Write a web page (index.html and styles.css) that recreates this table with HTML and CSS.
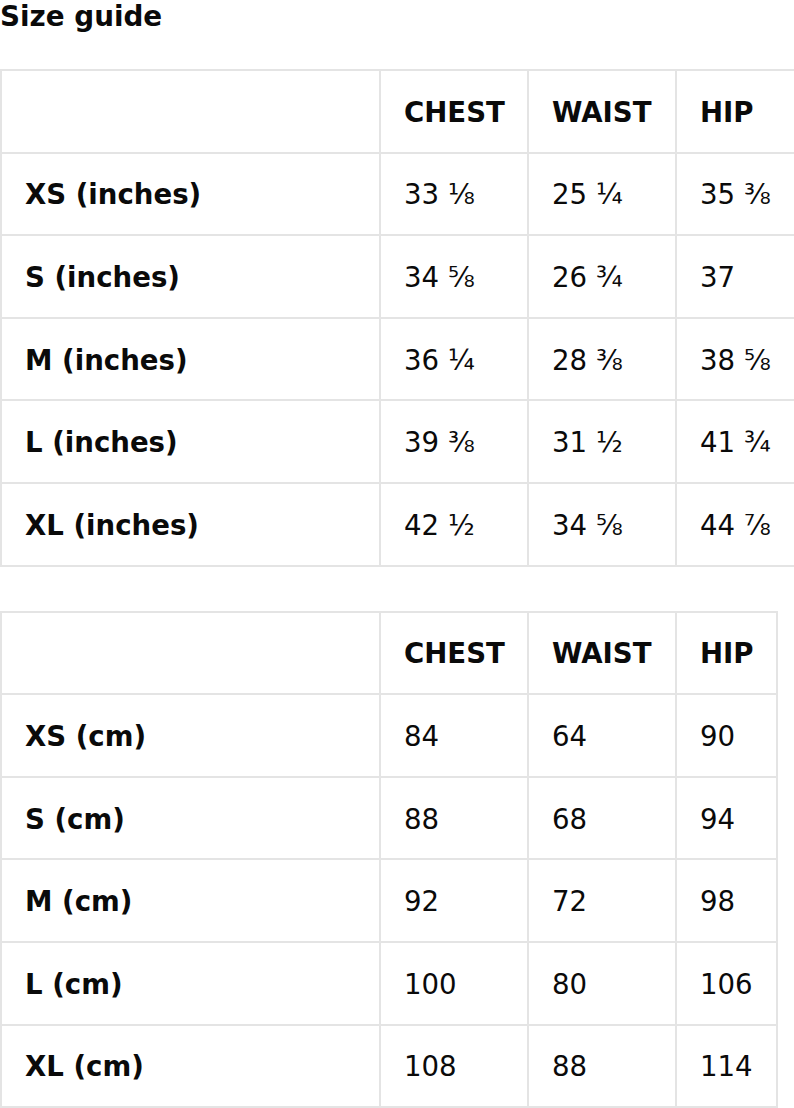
FILE: index.html
```html
<!DOCTYPE html>
<html lang="en">
<head>
<meta charset="utf-8">
<title>Size guide</title>
<link rel="stylesheet" href="styles.css">
</head>
<body>
<div class="page">
  <h1 class="title">Size guide</h1>
  <table class="sizes sizes-in">
    <colgroup><col class="c-label"><col class="c-val"><col class="c-val"><col class="c-last"></colgroup>
    <thead>
      <tr><th></th><th>CHEST</th><th>WAIST</th><th>HIP</th></tr>
    </thead>
    <tbody>
      <tr><th>XS (inches)</th><td>33 ⅛</td><td>25 ¼</td><td>35 ⅜</td></tr>
      <tr><th>S (inches)</th><td>34 ⅝</td><td>26 ¾</td><td>37</td></tr>
      <tr><th>M (inches)</th><td>36 ¼</td><td>28 ⅜</td><td>38 ⅝</td></tr>
      <tr><th>L (inches)</th><td>39 ⅜</td><td>31 ½</td><td>41 ¾</td></tr>
      <tr><th>XL (inches)</th><td>42 ½</td><td>34 ⅝</td><td>44 ⅞</td></tr>
    </tbody>
  </table>
  <table class="sizes sizes-cm">
    <colgroup><col class="c-label"><col class="c-val"><col class="c-val"><col class="c-last"></colgroup>
    <thead>
      <tr><th></th><th>CHEST</th><th>WAIST</th><th>HIP</th></tr>
    </thead>
    <tbody>
      <tr><th>XS (cm)</th><td>84</td><td>64</td><td>90</td></tr>
      <tr><th>S (cm)</th><td>88</td><td>68</td><td>94</td></tr>
      <tr><th>M (cm)</th><td>92</td><td>72</td><td>98</td></tr>
      <tr><th>L (cm)</th><td>100</td><td>80</td><td>106</td></tr>
      <tr><th>XL (cm)</th><td>108</td><td>88</td><td>114</td></tr>
    </tbody>
  </table>
</div>
</body>
</html>
```

FILE: styles.css
```css
html, body {
  margin: 0;
  padding: 0;
  background: #ffffff;
}

body {
  font-family: "DejaVu Sans", Verdana, sans-serif;
  color: #0a0a0a;
}

.page {
  width: 794px;
  height: 1108px;
  overflow: hidden;
}

.title {
  margin: 0;
  font-size: 27.8px;
  font-weight: bold;
  line-height: 33px;
  height: 33px;
}

.sizes {
  border-collapse: separate;
  border-spacing: 0;
  table-layout: fixed;
  border-top: 2px solid #e4e4e4;
  border-left: 2px solid #e4e4e4;
  font-size: 27.6px;
}

.sizes-in {
  margin-top: 36px;
  width: 812px;
}

.sizes-cm {
  margin-top: 44px;
  width: 778px;
}

.c-label { width: 379px; }
.c-val { width: 148px; }

.sizes th,
.sizes td {
  box-sizing: border-box;
  height: 82.6px;
  padding: 3px 0 0 23px;
  border-right: 2px solid #e4e4e4;
  border-bottom: 2px solid #e4e4e4;
  text-align: left;
  vertical-align: middle;
  white-space: nowrap;
  line-height: 32px;
}

.sizes th {
  font-weight: bold;
}

.sizes td {
  font-weight: normal;
}
```
